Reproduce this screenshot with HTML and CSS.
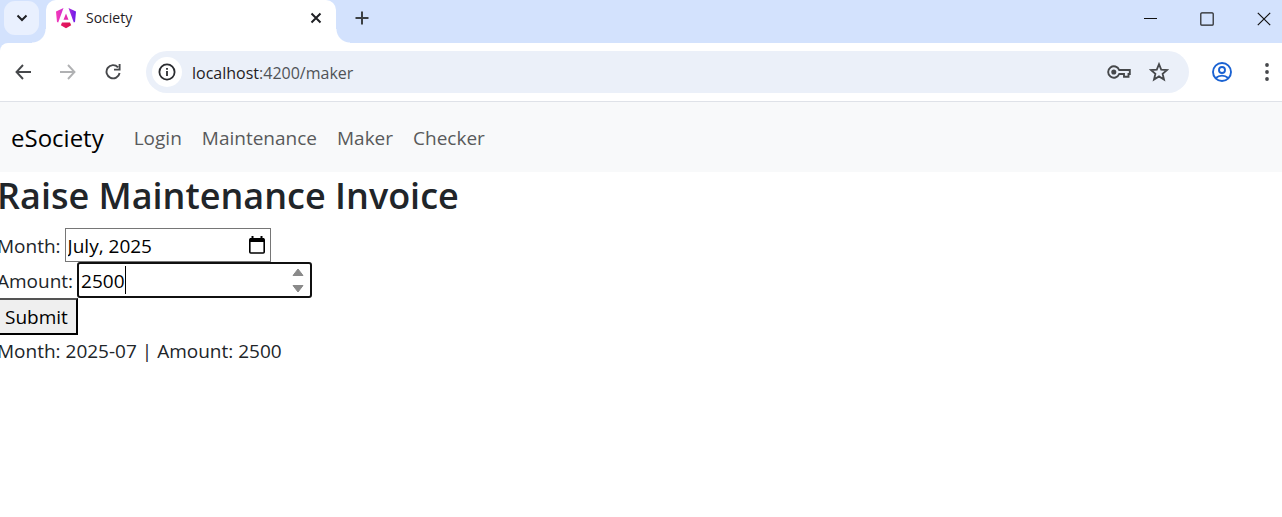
FILE: index.html
```html
<!DOCTYPE html>
<html lang="en">
<head>
<meta charset="utf-8">
<title>Society</title>
<link rel="stylesheet" href="styles.css">
</head>
<body>
<div class="browser">
  <div class="tabstrip">
    <button class="tab-search" aria-label="Search tabs">
      <svg width="12" height="8" viewBox="0 0 12 8" fill="none" stroke="#1f2024" stroke-width="2"><path d="M1.500 1.500 6 6l4.500-4.500"/></svg>
    </button>
    <div class="tab">
      <svg width="20" height="21" viewBox="0 0 20 21">
        <defs>
          <linearGradient id="shield" gradientUnits="userSpaceOnUse" x1="0" y1="4" x2="20" y2="4"><stop offset="0" stop-color="#f637b4"/><stop offset=".5" stop-color="#c42ddb"/><stop offset="1" stop-color="#6a1be8"/></linearGradient>
          <linearGradient id="base" x1="0" y1="0" x2="1" y2="0"><stop offset="0" stop-color="#e8186b"/><stop offset="1" stop-color="#d9124e"/></linearGradient>
        </defs>
        <g fill="url(#shield)">
          <path d="M0 3.500 7.500 0 2.200 14.500 1 14z"/>
          <path d="M20 3.500 12.500 0l5.300 14.500L19 14z"/>
        </g>
        <path fill="#e42eb0" d="m10 5.500 2.500 6.200h-5z"/>
        <path fill="url(#base)" d="M6 14.500h8l1.200 2.800L10 20.300l-5.200-3z"/>
      </svg>
      <span class="tab-title">Society</span>
      <button class="icon-button tab-close" aria-label="Close tab">
        <svg width="12" height="12" viewBox="0 0 12 12" stroke="#1f2024" stroke-width="2"><path d="m1.500 1.500 9 9M10.500 1.500l-9 9"/></svg>
      </button>
    </div>
    <button class="icon-button new-tab" aria-label="New tab">
      <svg width="14" height="14" viewBox="0 0 14 14" stroke="#3c4043" stroke-width="2"><path d="M7 .5v13M.5 7h13"/></svg>
    </button>
    <div class="window-buttons">
      <button class="icon-button" aria-label="Minimize"><svg width="14" height="14" viewBox="0 0 14 14" stroke="#111" stroke-width="1"><path d="M1 6.500h13"/></svg></button>
      <button class="icon-button" aria-label="Maximize"><svg width="14" height="14" viewBox="0 0 14 14" fill="none" stroke="#222" stroke-width="1.200"><rect x=".8" y=".8" width="12.400" height="12.400" rx="1"/></svg></button>
      <button class="icon-button" aria-label="Close window"><svg width="14" height="14" viewBox="0 0 14 14" stroke="#111" stroke-width="1.200"><path d="m.8.8 12.400 12.400M13.200.8.8 13.200"/></svg></button>
    </div>
  </div>
  <div class="toolbar">
    <div class="history">
      <button class="icon-button" aria-label="Back"><svg width="16" height="16" viewBox="0 0 16 16" fill="none" stroke="#46484b" stroke-width="1.900"><path d="M8 1 1.500 8 8 15M1.500 8H16"/></svg></button>
      <button class="icon-button" aria-label="Forward"><svg width="16" height="16" viewBox="0 0 16 16" fill="none" stroke="#b0b1b3" stroke-width="1.900"><path d="m8 1 6.500 7L8 15M14.500 8H0"/></svg></button>
      <button class="icon-button" aria-label="Reload"><svg width="16" height="16" viewBox="0 0 16 16" fill="none" stroke="#46484b" stroke-width="1.900"><path d="M13 3.300A6.600 6.600 0 1 0 14.600 9M14.600 0v5.600H9"/></svg></button>
    </div>
    <div class="omnibox">
      <button class="site-info" aria-label="Site information">
        <svg width="18" height="18" viewBox="0 0 18 18"><circle cx="9" cy="9" r="7.600" fill="none" stroke="#2b2c30" stroke-width="1.800"/><path d="M8.100 8h1.800v5H8.100zM8.100 5h1.800v1.800H8.100z" fill="#2b2c30"/></svg>
      </button>
      <div class="address">localhost<span class="address-path">:4200/maker</span></div>
      <button class="icon-button" aria-label="Passwords"><svg width="24" height="14" viewBox="0 0 24 14" fill="none" stroke="#46484b" stroke-width="1.900"><path d="M12.200 5A5.700 5.700 0 1 0 12.200 9H17v2.700h4.500V9h1.300V5z"/><circle cx="6.800" cy="7" r="1.600" fill="#46484b"/></svg></button>
      <button class="icon-button" aria-label="Bookmark"><svg width="20" height="20" viewBox="0 0 20 20" fill="none" stroke="#46484b" stroke-width="1.800"><path d="m10 2.200 2.200 5.400 5.900.4-4.500 3.800 1.400 5.700-5-3.100-5 3.100 1.400-5.700L1.900 8l5.900-.4z"/></svg></button>
    </div>
    <button class="icon-button" aria-label="Profile"><svg width="20" height="20" viewBox="0 0 20 20" fill="none" stroke="#1a62d2" stroke-width="1.900"><circle cx="10" cy="10" r="9"/><circle cx="10" cy="8" r="3"/><path d="M3.800 16c3.500-3.200 8.900-3.200 12.400 0"/></svg></button>
    <button class="icon-button menu" aria-label="Menu"><svg width="4" height="18" viewBox="0 0 4 18" fill="#46484b"><circle cx="2" cy="2" r="1.900"/><circle cx="2" cy="9" r="1.900"/><circle cx="2" cy="16" r="1.900"/></svg></button>
  </div>
</div>

<nav class="navbar">
  <a class="brand" href="#">eSociety</a>
  <a class="nav-link" href="#">Login</a>
  <a class="nav-link" href="#">Maintenance</a>
  <a class="nav-link" href="#">Maker</a>
  <a class="nav-link" href="#">Checker</a>
</nav>

<main class="content">
  <h1 class="title">Raise Maintenance Invoice</h1>
  <form>
    <div class="row">
      <label for="month">Month:</label>
      <div class="field month-field">
        <input class="input" id="month" type="text" value="July, 2025">
        <button type="button" class="icon-button" aria-label="Show month picker"><svg width="16" height="18" viewBox="0 0 16 18"><rect x=".8" y="2.800" width="14.400" height="14.200" rx="1" fill="none" stroke="#000" stroke-width="1.600"/><path d="M1 2h14v4H1zM2.500 0h2v3h-2zM11.500 0h2v3h-2z"/></svg></button>
      </div>
    </div>
    <div class="row">
      <label for="amount">Amount:</label>
      <div class="field amount-field">
        <input class="input" id="amount" type="number" value="2500">
        <span class="caret"></span>
        <div class="spinner">
          <button type="button" class="icon-button" aria-label="Increase"><svg width="12" height="8" viewBox="0 0 12 8" fill="#8a8a8a" stroke="#8a8a8a" stroke-linejoin="round"><path d="M6 1 11 7.500H1z"/></svg></button>
          <button type="button" class="icon-button" aria-label="Decrease"><svg width="12" height="8" viewBox="0 0 12 8" fill="#8a8a8a" stroke="#8a8a8a" stroke-linejoin="round"><path d="M6 7 11 .5H1z"/></svg></button>
        </div>
      </div>
    </div>
    <button type="button" class="submit">Submit</button>
  </form>
  <p class="summary">Month: 2025-07 | Amount: 2500</p>
</main>
</body>
</html>
```

FILE: styles.css
```css
* { box-sizing: border-box; }
body {
  margin: 0;
  background: #fff;
  color: #212529;
  font-family: "Segoe UI", "Open Sans", "Noto Sans", sans-serif;
  font-size: 19px;
  line-height: 30px;
  overflow-x: hidden;
}
button, input { font: inherit; color: inherit; }
svg { display: block; flex: none; }
.icon-button {
  display: flex;
  align-items: center;
  justify-content: center;
  padding: 0;
  border: 0;
  background: none;
}

.browser { background: #d3e2fd; border-bottom: 1px solid #dfe2e8; }
.tabstrip { display: flex; height: 43px; padding-left: 4px; }
.tab-search {
  display: flex;
  align-items: center;
  justify-content: center;
  width: 35px;
  height: 34px;
  margin: 1px 7px 0 0;
  padding: 0;
  border: 0;
  border-radius: 11px;
  background: #e9f0fe;
}
.tab {
  position: relative;
  display: flex;
  align-items: center;
  width: 290px;
  padding: 0 14px 7px 10px;
  border-radius: 10px 10px 0 0;
  background: #fff;
}
.tab::before, .tab::after {
  content: "";
  position: absolute;
  bottom: 0;
  width: 14px;
  height: 14px;
}
.tab::before { right: 100%; background: radial-gradient(circle at 0 0, transparent 13px, #fff 14px); }
.tab::after { left: 100%; background: radial-gradient(circle at 100% 0, transparent 13px, #fff 14px); }
.tab-title { margin-left: 10px; font-size: 14px; color: #1f2024; }
.tab-close { margin-left: auto; }
.new-tab { margin: 0 auto 7px 19px; }
.window-buttons { display: flex; gap: 43px; padding: 0 11px 6px 0; }

.toolbar {
  display: flex;
  align-items: center;
  gap: 23px;
  height: 58px;
  padding: 0 13px 0 15px;
  border-radius: 8px 0 0 0;
  background: #fff;
}
.history { display: flex; gap: 29px; margin-right: 2px; }
.menu { margin-left: 10px; }
.omnibox {
  display: flex;
  flex: 1;
  align-items: center;
  gap: 18px;
  height: 42px;
  padding: 0 20px 0 6px;
  border-radius: 21px;
  background: #ebf0f9;
}
.site-info {
  display: flex;
  align-items: center;
  justify-content: center;
  width: 30px;
  height: 30px;
  padding: 0;
  border: 0;
  border-radius: 50%;
  background: #fff;
}
.address { flex: 1; margin-left: -8px; padding-top: 1px; font-size: 16px; color: #1f2024; }
.address-path { color: #505357; }

.navbar {
  display: flex;
  align-items: center;
  gap: 20px;
  height: 70px;
  padding: 1px 11px 0;
  background: #f8f9fa;
}
.navbar a { text-decoration: none; }
.brand { margin-right: 10px; font-size: 24px; color: #000; }
.nav-link { color: #595a5b; }

.content { margin-left: -3px; }
.title {
  margin: 0 0 8px;
  font-size: 36px;
  font-weight: 600;
  line-height: 48px;
}
.row { display: flex; align-items: center; }
.row label { margin-right: 4px; padding-top: 1px; }
.field { position: relative; display: flex; align-items: center; background: #fff; color: #000; }
.input { width: 100%; min-width: 0; padding: 1px 0 0; border: 0; outline: 0; background: none; appearance: textfield; }
.input::-webkit-inner-spin-button { appearance: none; }
.month-field { width: 206px; height: 34px; padding: 0 5px 0 2px; border: 1px solid #767676; }
.amount-field { width: 235px; height: 36px; padding: 0 6px 0 2px; border: 2px solid #101010; border-radius: 3px; }
.caret { position: absolute; left: 46px; top: 2px; width: 1px; height: 28px; background: #000; }
.spinner { display: flex; flex-direction: column; gap: 9px; }
.submit {
  display: block;
  height: 37px;
  padding: 1px 8px 0 6px;
  border: 2px outset #000;
  background: #efefef;
  color: #000;
}
.summary { margin: 1px 0 0; }
```
